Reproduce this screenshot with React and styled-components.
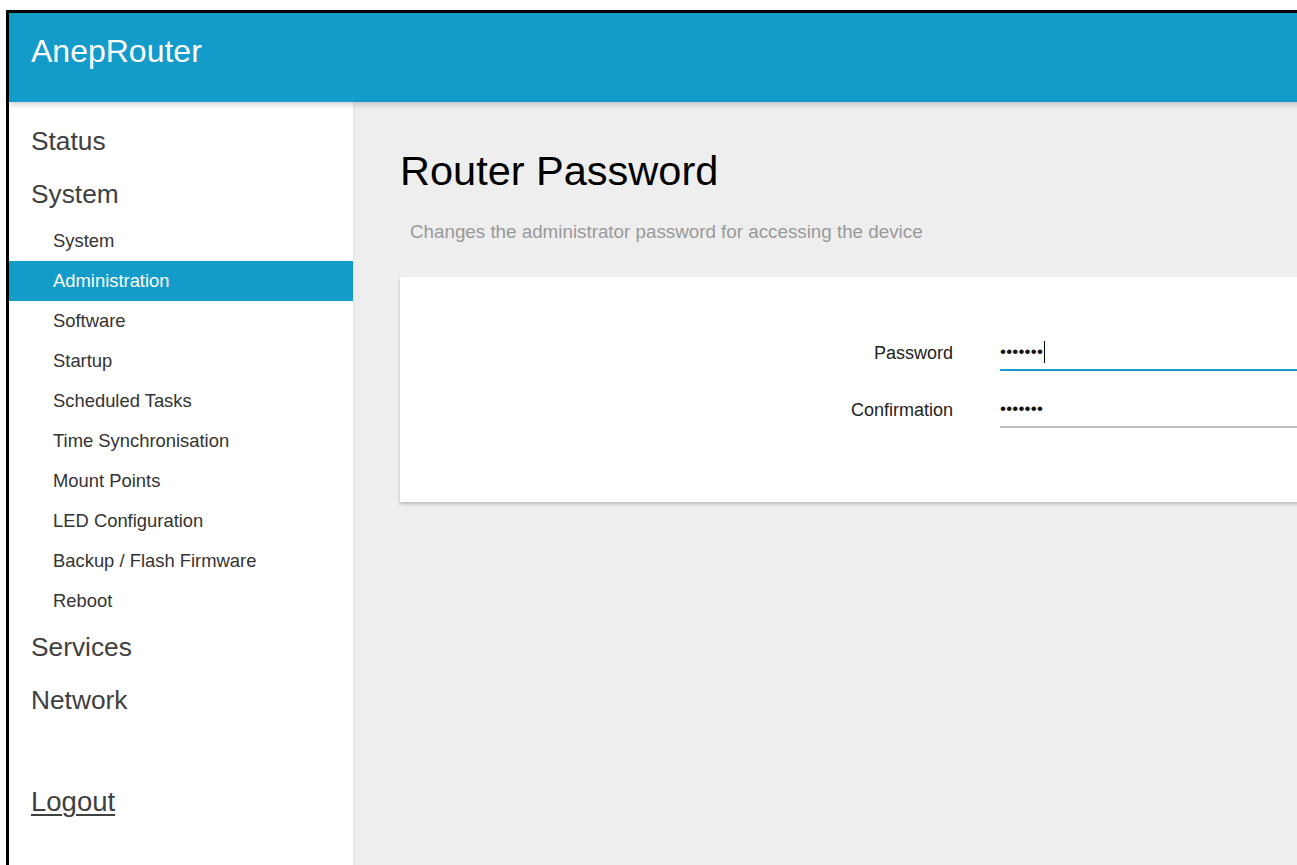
import React from 'react';
import styled, { createGlobalStyle } from 'styled-components';

const GlobalStyle = createGlobalStyle`
    html, body {
        margin: 0;
        padding: 0;
        background: #fff;
        overflow: hidden;
    }
    body {
        font-family: "Liberation Sans", Arial, Helvetica, sans-serif;
    }
`;

const blue = '#139bc9';

const Frame = styled.div`
    margin: 10px 0 0 6px;
    width: 1400px;
    height: 900px;
    border-top: 3px solid #000;
    border-left: 3px solid #000;
    display: flex;
    flex-direction: column;
`;

const Header = styled.header`
    position: relative;
    z-index: 2;
    height: 89px;
    box-sizing: border-box;
    padding: 22px 0 0 22px;
    background: ${blue};
    box-shadow: 0 2px 6px rgba(0, 0, 0, 0.22);
`;

const Brand = styled.a`
    color: #fff;
    font-size: 32px;
    line-height: 32px;
    text-decoration: none;
`;

const Body = styled.div`
    flex: 1;
    display: flex;
`;

const Sidebar = styled.nav`
    width: 344px;
    flex: none;
    background: #fff;
    padding-top: 13px;
    box-shadow: 1px 0 2px rgba(0, 0, 0, 0.05);
    position: relative;
    z-index: 1;
`;

const Section = styled.div`
    height: 53px;
    line-height: 53px;
    padding-left: 22px;
    font-size: 26.3px;
    color: #404040;
`;

const SubItem = styled.div`
    height: 40px;
    line-height: 40px;
    padding-left: 44px;
    font-size: 18.4px;
    color: ${p => (p.$active ? '#fff' : '#333')};
    background: ${p => (p.$active ? blue : 'transparent')};
`;

const Logout = styled(Section)`
    margin-top: 48px;
    font-size: 27.5px;
    text-decoration: underline;
    text-underline-offset: 3px;
    text-decoration-thickness: 1.5px;
`;

const Main = styled.main`
    flex: 1;
    background: #eee;
    padding: 45px 40px 0 47px;
`;

const Title = styled.h2`
    margin: 0;
    font-size: 41.5px;
    line-height: 48px;
    font-weight: normal;
    color: #000;
`;

const Description = styled.p`
    margin: 25px 0 0;
    padding-left: 10px;
    font-size: 18.8px;
    line-height: 24px;
    color: #999;
`;

const Card = styled.div`
    margin-top: 33px;
    background: #fff;
    padding: 58px 0 74px;
    box-shadow: 0 2px 3px rgba(0, 0, 0, 0.22);
    display: flex;
    flex-direction: column;
    gap: 21px;
`;

const Row = styled.div`
    display: grid;
    grid-template-columns: 553px 1fr;
    column-gap: 47px;
    align-items: center;
`;

const Label = styled.label`
    text-align: right;
    font-size: 18px;
    color: #222;
`;

const Field = styled.div`
    height: 36px;
    box-sizing: border-box;
    display: flex;
    align-items: center;
    border-bottom: 2px solid ${p => (p.$focused ? '#1a9bd0' : '#bdbdbd')};
    font-size: 17px;
    color: #111;
    letter-spacing: 0.2px;
`;

const Caret = styled.span`
    display: inline-block;
    width: 1px;
    height: 22px;
    margin-left: 1px;
    background: #000;
`;

const subItems = [
    'System',
    'Administration',
    'Software',
    'Startup',
    'Scheduled Tasks',
    'Time Synchronisation',
    'Mount Points',
    'LED Configuration',
    'Backup / Flash Firmware',
    'Reboot',
];

const PasswordRow = ({ label, focused }) => (
    <Row>
        <Label>{label}</Label>
        <Field $focused={focused}>
            {'•••••••'}
            {focused && <Caret />}
        </Field>
    </Row>
);

const App = () => {
    return (
        <>
            <GlobalStyle />
            <Frame>
                <Header>
                    <Brand href="#">AnepRouter</Brand>
                </Header>
                <Body>
                    <Sidebar>
                        <Section>Status</Section>
                        <Section>System</Section>
                        {subItems.map(item => (
                            <SubItem key={item} $active={item === 'Administration'}>
                                {item}
                            </SubItem>
                        ))}
                        <Section>Services</Section>
                        <Section>Network</Section>
                        <Logout>Logout</Logout>
                    </Sidebar>
                    <Main>
                        <Title>Router Password</Title>
                        <Description>
                            Changes the administrator password for accessing the device
                        </Description>
                        <Card>
                            <PasswordRow label="Password" focused />
                            <PasswordRow label="Confirmation" />
                        </Card>
                    </Main>
                </Body>
            </Frame>
        </>
    );
};

export default App;
